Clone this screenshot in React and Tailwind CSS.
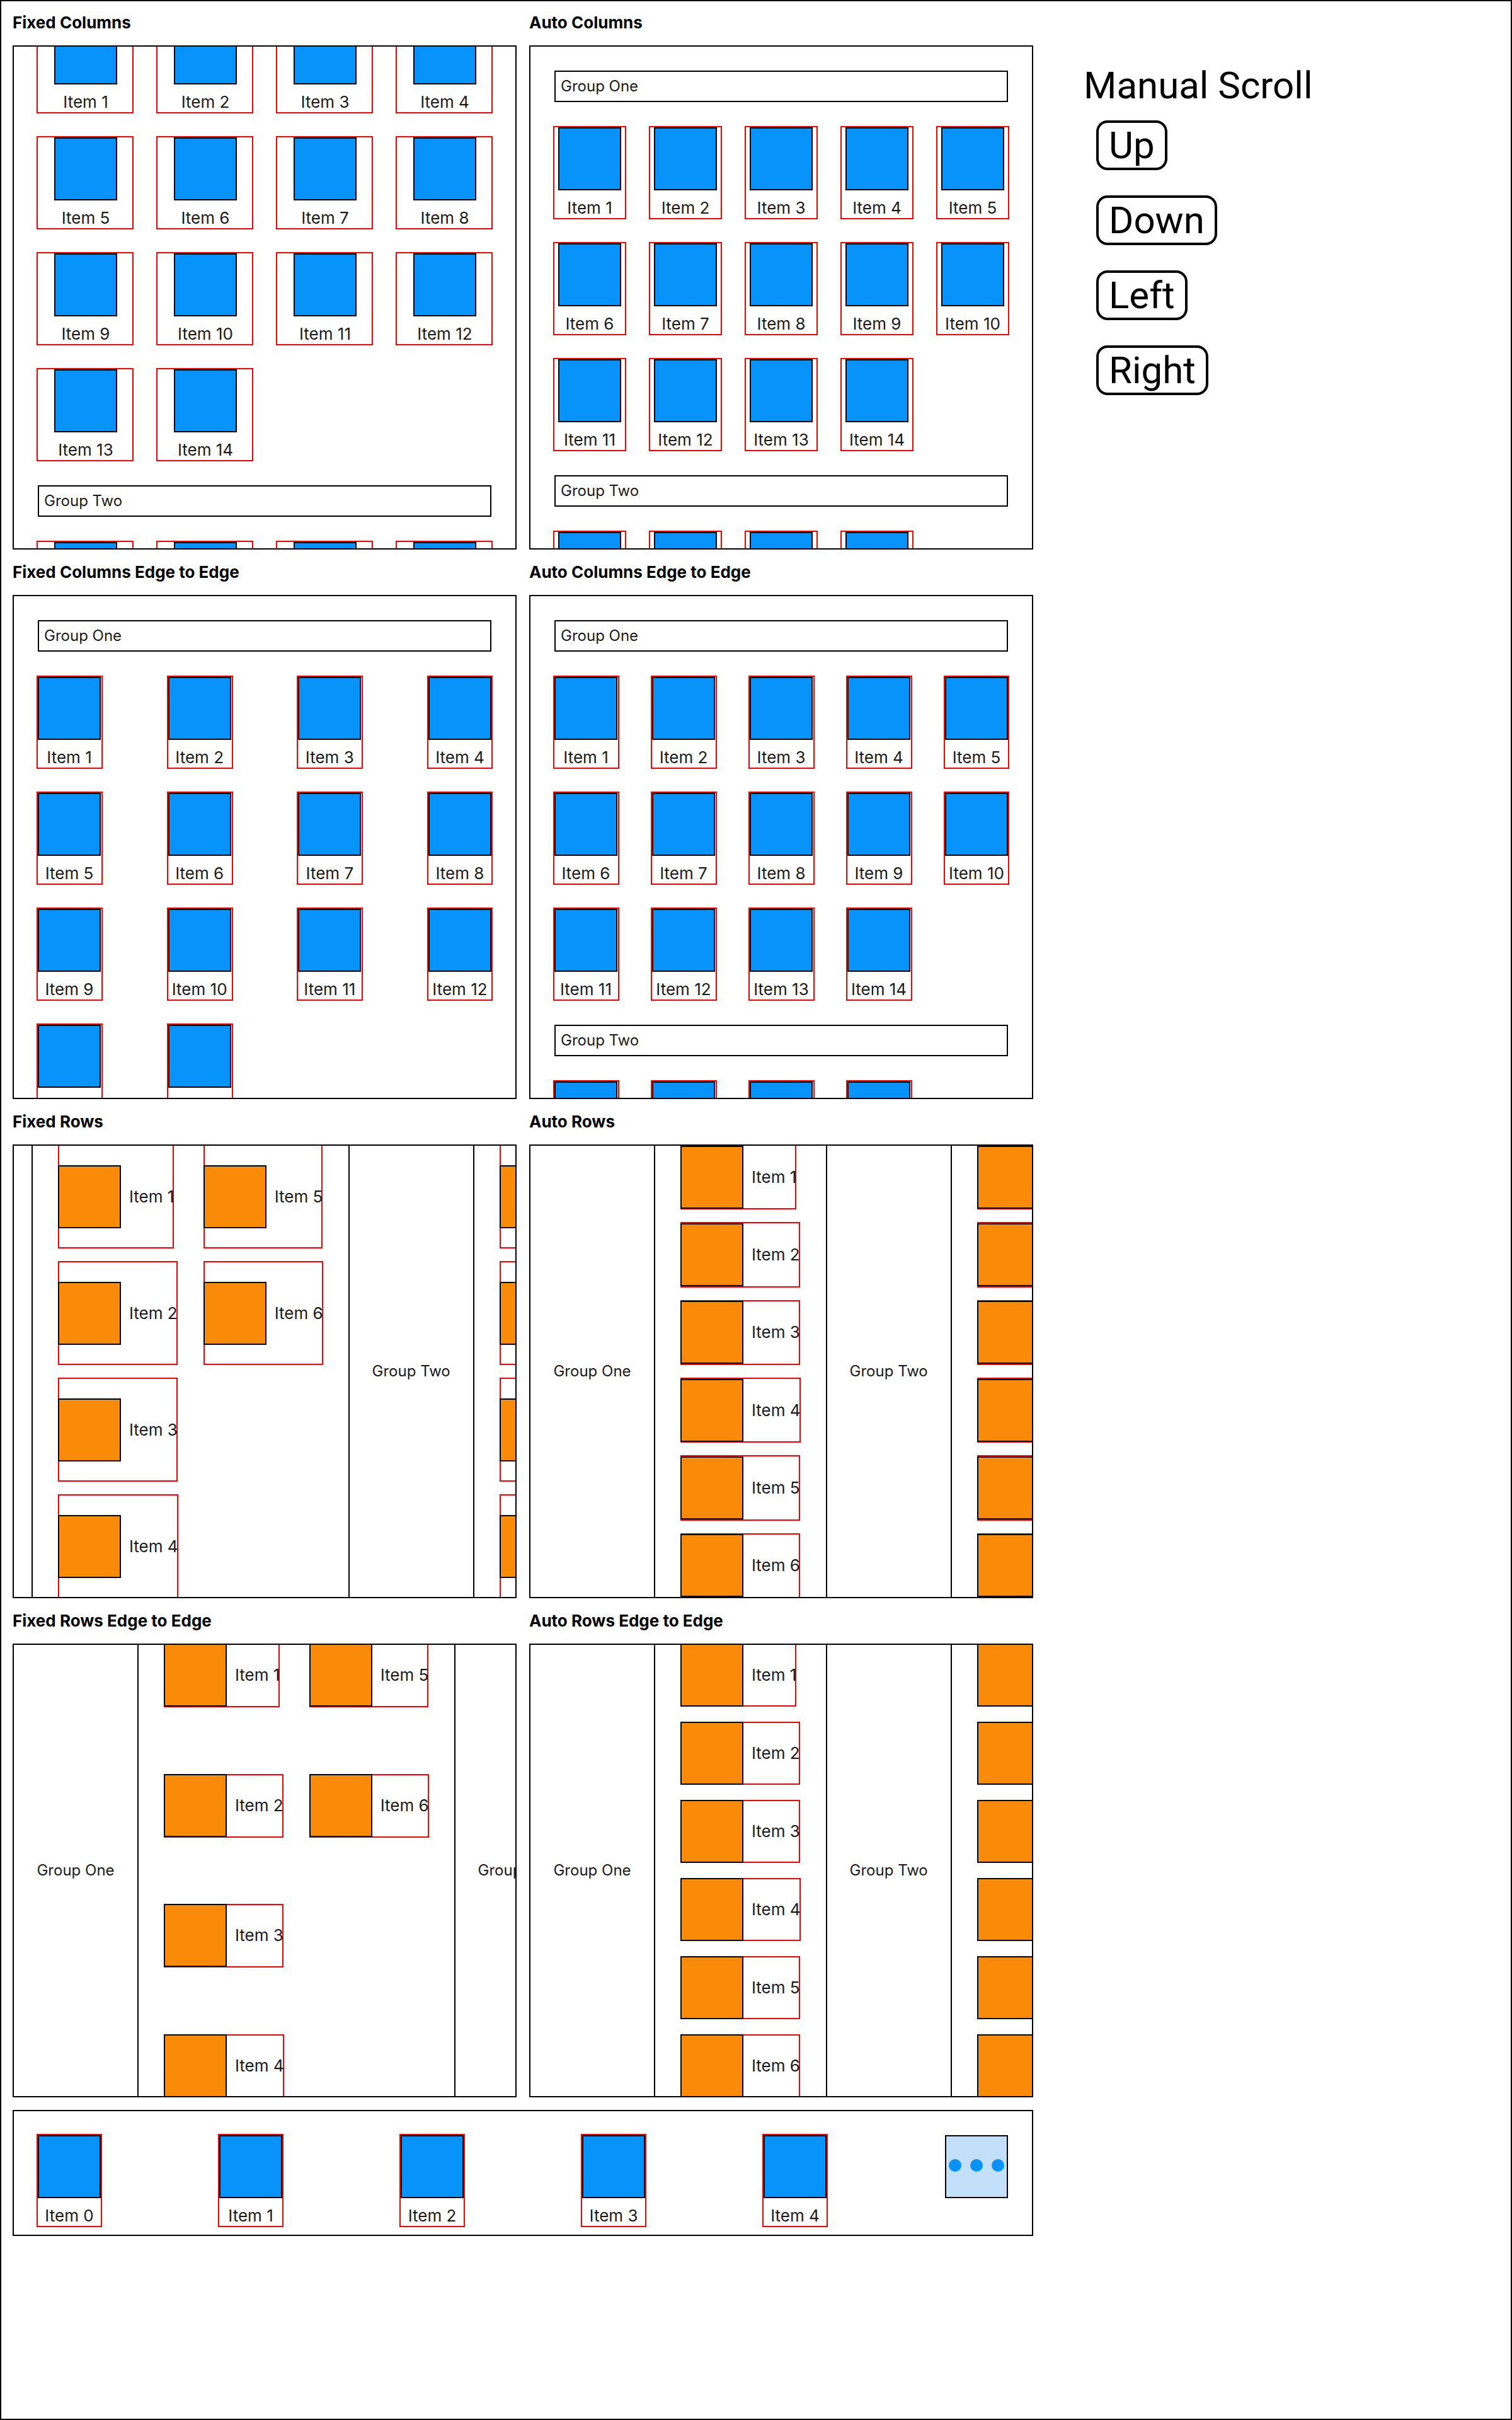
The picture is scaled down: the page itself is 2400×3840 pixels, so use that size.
import { useLayoutEffect, useRef } from "react";

const names = (count, first = 1) =>
  Array.from({ length: count }, (_, i) => `Item ${i + first}`);

const columnGroups = [
  { name: "Group One", items: names(14) },
  { name: "Group Two", items: names(4) },
];

const rowGroups = [
  { name: "Group One", items: names(6) },
  { name: "Group Two", items: names(6) },
];

const COLUMN_MODES = {
  fixed: { count: 4, grid: "grid-cols-4 gap-10" },
  auto: { count: 5, grid: "grid-cols-5 gap-10" },
  fixedEdge: { count: 4, edge: true, grid: "grid-cols-[repeat(4,100px)] justify-between gap-y-10" },
  autoEdge: { count: 5, edge: true, grid: "grid-cols-[repeat(5,100px)] justify-between gap-y-10" },
};

const ROW_MODES = {
  fixed: { grid: "grid-rows-4 gap-y-5" },
  auto: { grid: "grid-rows-6 gap-y-5" },
  fixedEdge: { edge: true, grid: "grid-rows-[repeat(4,100px)] content-between" },
  autoEdge: { grid: "grid-rows-[repeat(6,100px)] content-between" },
};

function ColumnItem({ name, className = "" }) {
  return (
    <li className={`flex flex-col items-center gap-3 ring-2 ring-[#ff0000] ${className}`}>
      <span className="size-[100px] border-2 border-black bg-[#0893fa]" />
      <span className="text-[26px] leading-8 whitespace-nowrap text-[#1a1a1a]">{name}</span>
    </li>
  );
}

function RowItem({ name, className = "" }) {
  return (
    <li className={`flex items-center gap-[13px] justify-self-start ring-2 ring-inset ring-[#ff0000] ${className}`}>
      <span className="size-[100px] shrink-0 border-2 border-black bg-[#f98b08]" />
      <span className="text-[26px] leading-8 whitespace-nowrap text-[#1a1a1a]">{name}</span>
    </li>
  );
}

function Panel({ title, shape, scrollTop = 0, scrollLeft = 0, children }) {
  const ref = useRef(null);
  useLayoutEffect(() => {
    ref.current.scrollTop = scrollTop;
    ref.current.scrollLeft = scrollLeft;
  }, [scrollTop, scrollLeft]);
  return (
    <section className="min-w-0">
      <h2 className="flex h-[72px] items-center text-[26px] leading-8 font-bold">{title}</h2>
      <div className="relative after:pointer-events-none after:absolute after:inset-0 after:border-2 after:border-black">
        <div ref={ref} data-scroller className={`overflow-hidden ${shape}`}>
          {children}
        </div>
      </div>
    </section>
  );
}

function ColumnPanel({ title, mode, scrollTop }) {
  const { count, edge, grid } = COLUMN_MODES[mode];
  const itemClass = (index) => {
    if (mode === "fixed") return "pl-[2px]";
    return edge && index % count !== count - 1 ? "-mr-px pr-px" : "";
  };
  return (
    <Panel title={title} shape="aspect-square" scrollTop={scrollTop}>
      <div className="flex flex-col gap-10 p-10">
        {columnGroups.map((group) => (
          <div key={group.name} className="flex flex-col gap-10">
            <h3 className="flex h-[50px] items-center border-2 border-black px-2 text-2xl text-[#1a1a1a]">
              {group.name}
            </h3>
            <ul className={`grid ${grid}`}>
              {group.items.map((name, index) => (
                <ColumnItem key={name} name={name} className={itemClass(index)} />
              ))}
            </ul>
          </div>
        ))}
      </div>
    </Panel>
  );
}

function RowPanel({ title, mode, scrollLeft }) {
  const { edge, grid } = ROW_MODES[mode];
  return (
    <Panel title={title} shape="aspect-[10/9]" scrollLeft={scrollLeft}>
      <div className="flex h-full w-max">
        {rowGroups.map((group) => (
          <div key={group.name} className="flex h-full">
            <h3 className="flex w-[200px] items-center justify-center border-2 border-black text-2xl text-[#1a1a1a]">
              {group.name}
            </h3>
            <ul className={`mx-10 grid h-full grid-flow-col gap-x-10 ${grid}`}>
              {group.items.map((name) => (
                <RowItem key={name} name={name} className={edge ? "-mb-px pb-px" : ""} />
              ))}
            </ul>
          </div>
        ))}
      </div>
    </Panel>
  );
}

const directions = [
  { label: "Up", left: 0, top: -40 },
  { label: "Down", left: 0, top: 40 },
  { label: "Left", left: -40, top: 0 },
  { label: "Right", left: 40, top: 0 },
];

export default function App() {
  const panels = useRef(null);
  const scroll = ({ left, top }) => {
    panels.current
      .querySelectorAll("[data-scroller]")
      .forEach((el) => el.scrollBy({ left, top }));
  };

  return (
    <div className="grid min-h-screen grid-cols-[81fr_37fr] content-start bg-white px-5 font-['Inter',sans-serif] text-black ring-2 ring-black ring-inset">
      <main ref={panels} className="min-w-0">
        <div className="grid grid-cols-2 gap-x-5">
          <ColumnPanel title="Fixed Columns" mode="fixed" scrollTop={168} />
          <ColumnPanel title="Auto Columns" mode="auto" />
          <ColumnPanel title="Fixed Columns Edge to Edge" mode="fixedEdge" />
          <ColumnPanel title="Auto Columns Edge to Edge" mode="autoEdge" />
          <RowPanel title="Fixed Rows" mode="fixed" scrollLeft={168} />
          <RowPanel title="Auto Rows" mode="auto" />
          <RowPanel title="Fixed Rows Edge to Edge" mode="fixedEdge" />
          <RowPanel title="Auto Rows Edge to Edge" mode="autoEdge" />
        </div>
        <div className="mt-5 flex items-start justify-between px-10 pt-10 pb-4 ring-2 ring-black ring-inset">
          <ul className="contents">
            {names(5, 0).map((name) => (
              <ColumnItem key={name} name={name} />
            ))}
          </ul>
          <button
            type="button"
            aria-label="More items"
            className="flex size-[100px] items-center justify-center gap-[14px] border-2 border-black bg-[#c2e0fa] pb-1"
          >
            <span className="size-5 shrink-0 rounded-full bg-[#0893fa]" />
            <span className="size-5 shrink-0 rounded-full bg-[#0893fa]" />
            <span className="size-5 shrink-0 rounded-full bg-[#0893fa]" />
          </button>
        </div>
      </main>
      <aside className="flex flex-col items-start gap-5 pt-[100px] pl-20 font-['Roboto',sans-serif] text-[60px] leading-[71px]">
        <h2>Manual Scroll</h2>
        <div className="ml-5 flex flex-col items-start gap-10">
          {directions.map((direction) => (
            <button
              key={direction.label}
              type="button"
              onClick={() => scroll(direction)}
              className="rounded-[18px] border-4 border-black px-4"
            >
              {direction.label}
            </button>
          ))}
        </div>
      </aside>
    </div>
  );
}
